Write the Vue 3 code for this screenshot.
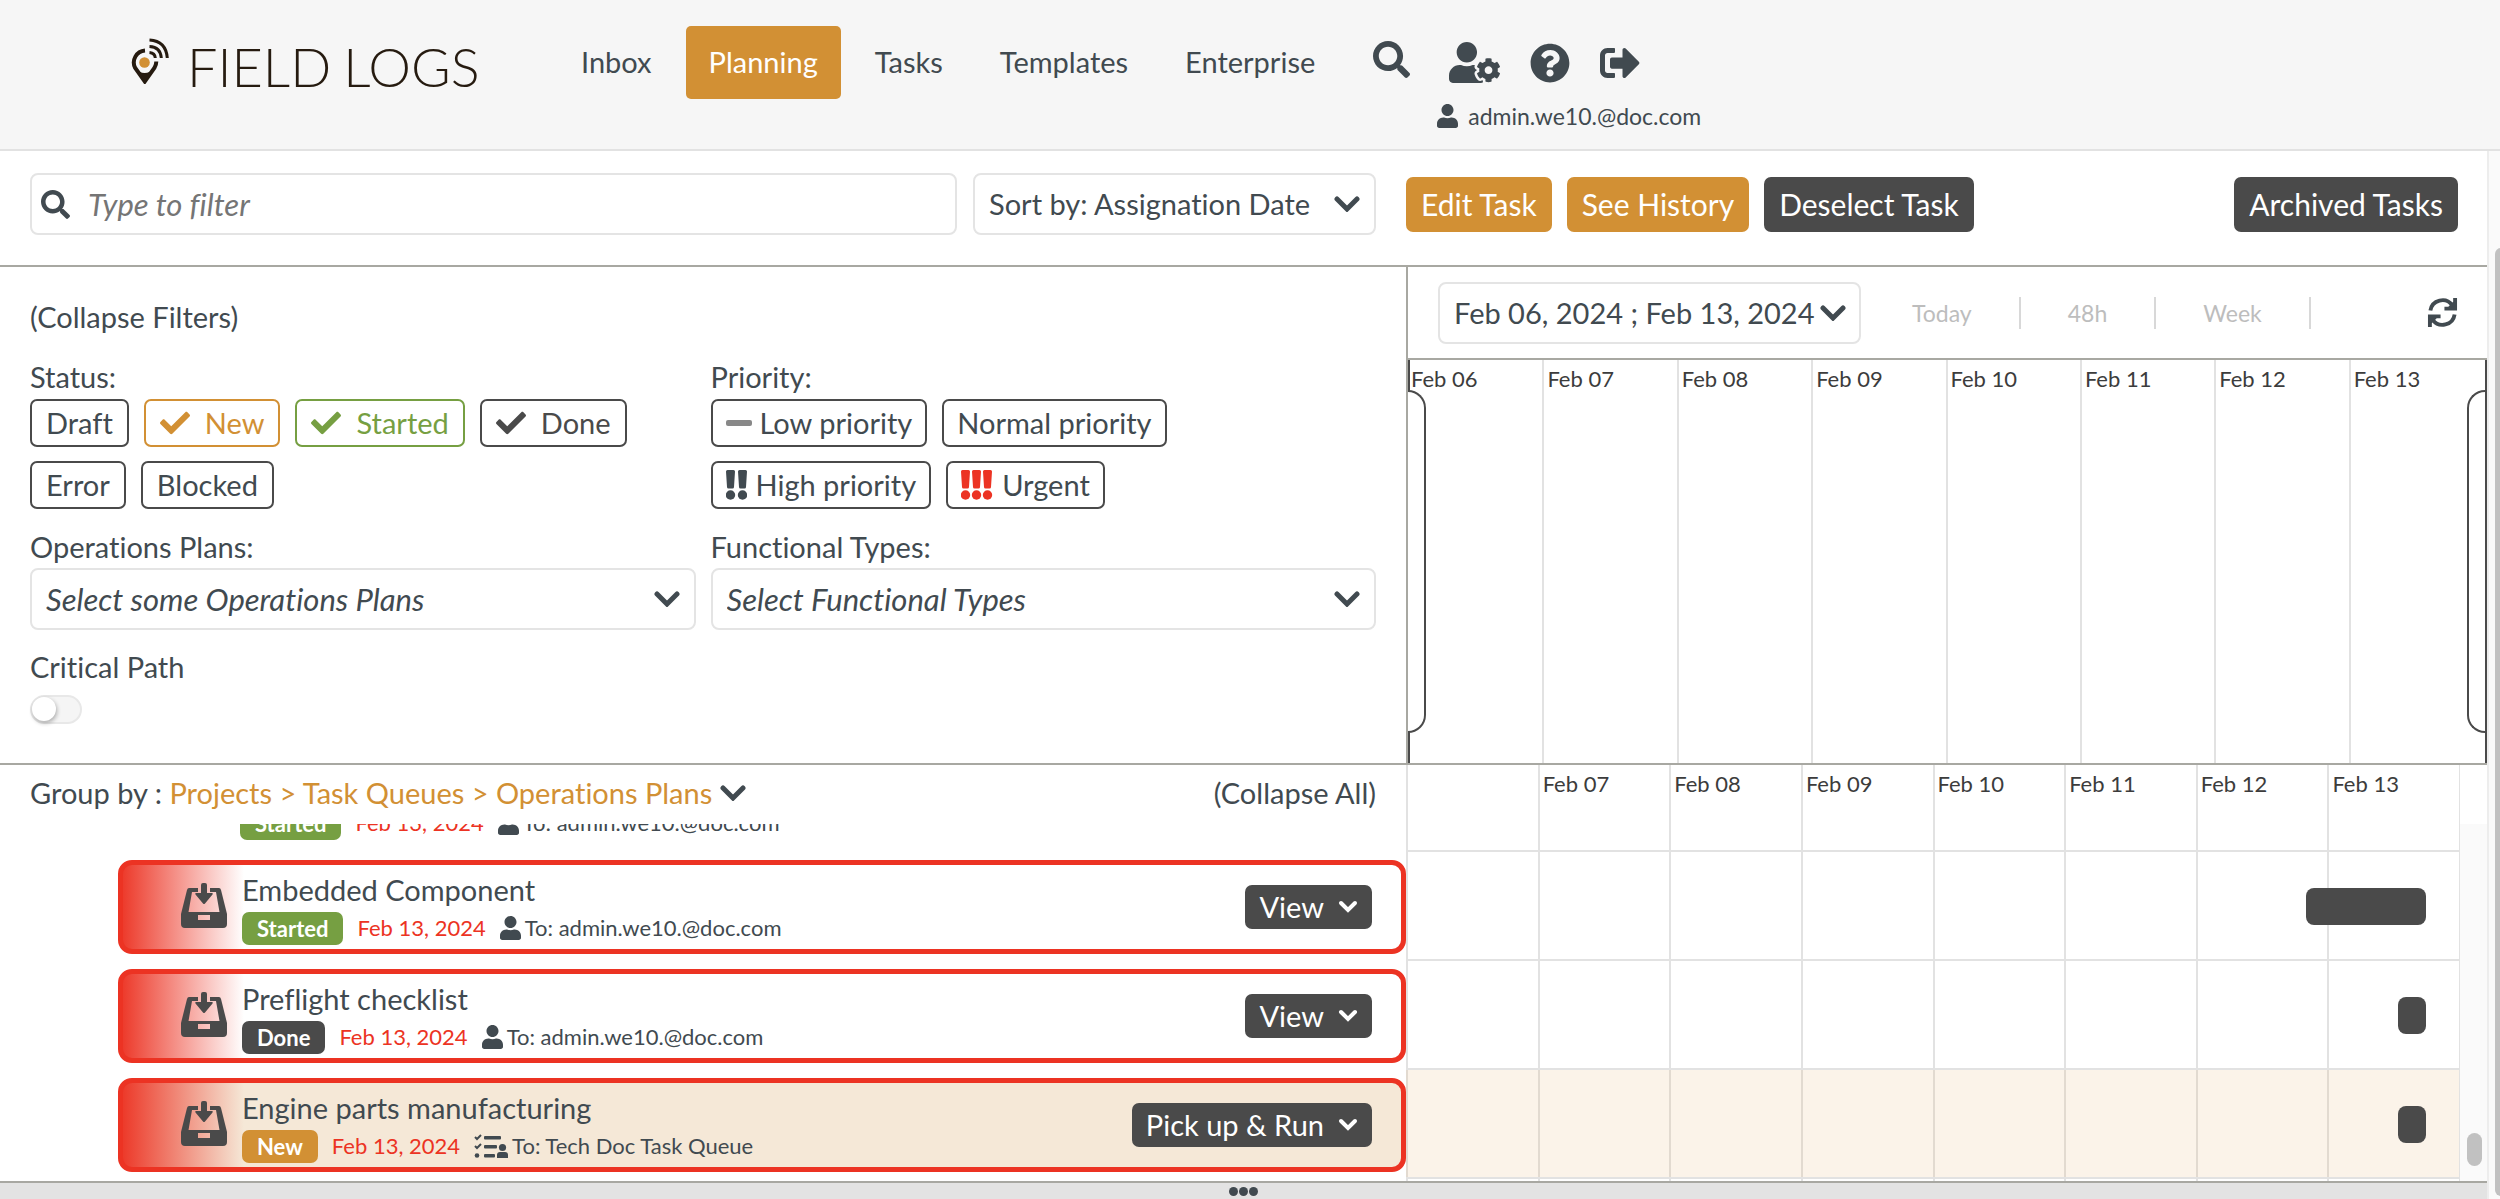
<script setup>
import { ref } from 'vue'

const ICONS = {
  search: { box: '0 0 512 512', d: 'M505 442.7L405.3 343c-4.5-4.5-10.6-7-17-7H372c27.6-35.3 44-79.7 44-128C416 93.1 322.9 0 208 0S0 93.1 0 208s93.1 208 208 208c48.3 0 92.7-16.4 128-44v16.3c0 6.4 2.5 12.5 7 17l99.7 99.7c9.4 9.4 24.6 9.4 33.9 0l28.3-28.3c9.4-9.4 9.4-24.6.1-34zM208 336c-70.7 0-128-57.2-128-128 0-70.7 57.2-128 128-128 70.7 0 128 57.2 128 128 0 70.7-57.2 128-128 128z' },
  user: { box: '0 0 448 512', d: 'M224 256c70.7 0 128-57.3 128-128S294.7 0 224 0 96 57.3 96 128s57.3 128 128 128zm89.6 32h-16.7c-22.2 10.2-46.9 16-72.9 16s-50.6-5.8-72.9-16h-16.7C60.2 288 0 348.2 0 422.4V464c0 26.5 21.5 48 48 48h352c26.5 0 48-21.5 48-48v-41.6c0-74.2-60.2-134.4-134.4-134.4z' },
  userCog: { box: '0 0 640 512', d: 'M610.5 373.3c2.6-14.1 2.6-28.5 0-42.6l25.8-14.9c3-1.7 4.3-5.2 3.3-8.5-6.7-21.6-18.2-41.2-33.2-57.4-2.3-2.5-6-3.1-9-1.4l-25.8 14.9c-10.9-9.3-23.4-16.5-36.9-21.3v-29.8c0-3.4-2.4-6.4-5.7-7.1-22.3-5-45-4.8-66.2 0-3.3.7-5.7 3.7-5.7 7.1v29.8c-13.5 4.8-26 12-36.9 21.3l-25.8-14.9c-2.9-1.7-6.7-1.1-9 1.4-15 16.2-26.5 35.8-33.2 57.4-1 3.3.4 6.8 3.3 8.5l25.8 14.9c-2.6 14.1-2.6 28.5 0 42.6l-25.8 14.9c-3 1.7-4.3 5.2-3.3 8.5 6.7 21.6 18.2 41.1 33.2 57.4 2.3 2.5 6 3.1 9 1.4l25.8-14.9c10.9 9.3 23.4 16.5 36.9 21.3v29.8c0 3.4 2.4 6.4 5.7 7.1 22.3 5 45 4.8 66.2 0 3.3-.7 5.7-3.7 5.7-7.1v-29.8c13.5-4.8 26-12 36.9-21.3l25.8 14.9c2.9 1.7 6.7 1.1 9-1.4 15-16.2 26.5-35.8 33.2-57.4 1-3.3-.4-6.8-3.3-8.5l-25.8-14.9zM496 400.5c-26.8 0-48.5-21.8-48.5-48.5s21.8-48.5 48.5-48.5 48.5 21.8 48.5 48.5-21.7 48.5-48.5 48.5zM224 256c70.7 0 128-57.3 128-128S294.7 0 224 0 96 57.3 96 128s57.3 128 128 128zm201.2 226.5c-2.3-1.2-4.6-2.6-6.8-3.9l-7.9 4.6c-6 3.4-12.8 5.3-19.6 5.3-10.9 0-21.4-4.6-28.9-12.6-18.3-19.8-32.3-43.9-40.2-69.6-5.5-17.7 1.9-36.4 17.9-45.7l7.9-4.6c-.1-2.6-.1-5.2 0-7.8l-7.9-4.6c-16-9.2-23.4-28-17.9-45.7.9-2.9 2.2-5.8 3.2-8.7-3.8-.3-7.5-1.2-11.4-1.2h-16.7c-22.2 10.2-46.9 16-72.9 16s-50.6-5.8-72.9-16h-16.7C60.2 288 0 348.2 0 422.4V464c0 26.5 21.5 48 48 48h352c10.1 0 19.5-3.2 27.2-8.5-1.2-3.8-2-7.7-2-11.8v-9.2z' },
  help: { box: '0 0 512 512', d: 'M504 256c0 136.997-111.043 248-248 248S8 392.997 8 256C8 119.083 119.043 8 256 8s248 111.083 248 248zM262.655 90c-54.497 0-89.255 22.957-116.549 63.758-3.536 5.286-2.353 12.415 2.715 16.258l34.699 26.31c5.205 3.947 12.621 3.008 16.665-2.122 17.864-22.658 30.113-35.797 57.303-35.797 20.429 0 45.698 13.148 45.698 32.958 0 14.976-12.363 22.667-32.534 33.976C247.128 238.528 216 254.941 216 296v4c0 6.627 5.373 12 12 12h56c6.627 0 12-5.373 12-12v-1.333c0-28.462 83.186-29.647 83.186-106.667 0-58.002-60.165-102-116.531-102zM256 338c-25.365 0-46 20.635-46 46 0 25.364 20.635 46 46 46s46-20.636 46-46c0-25.365-20.635-46-46-46z' },
  signOut: { box: '0 0 512 512', d: 'M497 273L329 441c-15 15-41 4.5-41-17v-96H152c-13.3 0-24-10.7-24-24v-96c0-13.3 10.7-24 24-24h136V88c0-21.4 25.9-32 41-17l168 168c9.3 9.4 9.3 24.6 0 34zM192 436v-40c0-6.6-5.4-12-12-12H96c-17.7 0-32-14.3-32-32V160c0-17.7 14.3-32 32-32h84c6.6 0 12-5.4 12-12V76c0-6.6-5.4-12-12-12H96c-53 0-96 43-96 96v192c0 53 43 96 96 96h84c6.6 0 12-5.4 12-12z' },
  check: { box: '0 0 512 512', d: 'M173.898 439.404l-166.4-166.4c-9.997-9.997-9.997-26.206 0-36.204l36.203-36.204c9.997-9.998 26.207-9.998 36.204 0L192 312.69 432.095 72.596c9.997-9.997 26.207-9.997 36.204 0l36.203 36.204c9.997 9.997 9.997 26.206 0 36.204l-294.4 294.401c-9.998 9.997-26.207 9.997-36.204-.001z' },
}

const nav = ['Inbox', 'Planning', 'Tasks', 'Templates', 'Enterprise']
const active = ref('Planning')

const statuses = ref([
  { name: 'Draft', on: false },
  { name: 'New', on: true },
  { name: 'Started', on: true },
  { name: 'Done', on: true },
  { name: 'Error', on: false },
  { name: 'Blocked', on: false },
])
const priorities = ref([
  { name: 'Low priority', mark: 'low', on: false },
  { name: 'Normal priority', mark: '', on: false },
  { name: 'High priority', mark: 'high', on: false },
  { name: 'Urgent', mark: 'urgent', on: false },
])
const marks = { high: [0, 12], urgent: [0, 11, 22] }

const days = ['Feb 06', 'Feb 07', 'Feb 08', 'Feb 09', 'Feb 10', 'Feb 11', 'Feb 12', 'Feb 13']

// start and span are percentages of the visible week
const tasks = [
  { id: 1, status: 'Started', to: 'admin.we10.@doc.com', plain: true },
  { id: 2, title: 'Embedded Component', status: 'Started', to: 'admin.we10.@doc.com', action: 'View', start: 85.5, span: 11.4 },
  { id: 3, title: 'Preflight checklist', status: 'Done', to: 'admin.we10.@doc.com', action: 'View', start: 94.2, span: 2.7 },
  { id: 4, title: 'Engine parts manufacturing', status: 'New', to: 'Tech Doc Task Queue', queue: true, action: 'Pick up & Run', start: 94.2, span: 2.7, selected: true },
]
const critical = ref(false)
const filter = ref('')
</script>

<template>
  <div class="app">
    <header class="top">
      <a class="logo" href="#" aria-label="Field Logs">
        <svg class="pin" viewBox="0 0 38 46" aria-hidden="true">
          <path d="M14 12.500A12 12 0 0 0 4.200 30L13.800 43.500L23.400 30A12 12 0 0 0 25.300 23.500" fill="none" stroke="#261b10" stroke-width="4" />
          <path d="M3.500 30Q13.500 40 24 30L13.600 45Z" fill="#261b10" />
          <circle cx="13.500" cy="24.500" r="5.300" fill="#d29034" />
          <g fill="none" stroke="#261b10" stroke-width="3">
            <path d="M18.500 14.500Q24 15 24.300 20" />
            <path d="M18.500 8.500Q29.500 9 30.300 20" />
            <path d="M18.500 2Q35 3 36.300 20" />
          </g>
        </svg>
        <span class="word"><span>FIELD</span><span>LOGS</span></span>
      </a>
      <nav class="nav">
        <a v-for="n in nav" :key="n" href="#" :class="{ active: n === active }" @click.prevent="active = n">{{ n }}</a>
      </nav>
      <div class="account">
        <div class="tools">
          <button class="bare" aria-label="Search"><svg class="i-search" :viewBox="ICONS.search.box"><path :d="ICONS.search.d" /></svg></button>
          <button class="bare" aria-label="Account settings"><svg class="i-cog" :viewBox="ICONS.userCog.box"><path :d="ICONS.userCog.d" /></svg></button>
          <button class="bare" aria-label="Help"><svg class="i-40" :viewBox="ICONS.help.box"><path :d="ICONS.help.d" /></svg></button>
          <button class="bare" aria-label="Sign out"><svg class="i-40" :viewBox="ICONS.signOut.box"><path :d="ICONS.signOut.d" /></svg></button>
        </div>
        <div class="who">
          <svg class="i-user" :viewBox="ICONS.user.box"><path :d="ICONS.user.d" /></svg>
          <span>admin.we10.@doc.com</span>
        </div>
      </div>
    </header>

    <div class="body">
      <main class="page">
        <section class="split toolbar">
          <div class="search-side">
            <label class="field search">
              <svg :viewBox="ICONS.search.box"><path :d="ICONS.search.d" /></svg>
              <input v-model="filter" type="text" placeholder="Type to filter" aria-label="Type to filter" />
            </label>
            <div class="field pick sort">
              <select aria-label="Sort by"><option>Sort by: Assignation Date</option></select>
              <svg class="chev" viewBox="0 0 26 16"><path d="M3 3L13 13L23 3" /></svg>
            </div>
          </div>
          <div class="actions">
            <button class="btn gold">Edit Task</button>
            <button class="btn gold">See History</button>
            <button class="btn dark">Deselect Task</button>
            <button class="btn dark last">Archived Tasks</button>
          </div>
        </section>

        <section class="split upper">
          <div class="filters">
            <button class="bare collapse">(Collapse Filters)</button>
            <div class="cols">
              <div>
                <div class="label">Status:</div>
                <div class="chips">
                  <button v-for="s in statuses" :key="s.name" class="chip" :class="s.on && s.name.toLowerCase()" :aria-pressed="s.on" @click="s.on = !s.on">
                    <svg v-if="s.on" class="tick" :viewBox="ICONS.check.box"><path :d="ICONS.check.d" /></svg>{{ s.name }}
                  </button>
                </div>
              </div>
              <div>
                <div class="label">Priority:</div>
                <div class="chips">
                  <button v-for="p in priorities" :key="p.name" class="chip prio" :aria-pressed="p.on" @click="p.on = !p.on">
                    <span v-if="p.mark === 'low'" class="dash"></span>
                    <svg v-else-if="p.mark" class="bangs" :class="p.mark" :viewBox="p.mark === 'high' ? '0 0 21 30' : '0 0 32 30'">
                      <g v-for="x in marks[p.mark]" :key="x">
                        <path :d="`M${x} 1.500Q${x} 0 ${x + 1.500} 0H${x + 7.500}Q${x + 9} 0 ${x + 9} 1.500L${x + 8} 17Q${x + 8} 18.500 ${x + 6.500} 18.500H${x + 2.500}Q${x + 1} 18.500 ${x + 1} 17Z`" />
                        <circle :cx="x + 4.5" cy="25" r="4.700" />
                      </g>
                    </svg>{{ p.name }}
                  </button>
                </div>
              </div>
              <div>
                <label class="label" for="plans">Operations Plans:</label>
                <div class="field pick">
                  <select id="plans" class="hint"><option>Select some Operations Plans</option></select>
                  <svg class="chev" viewBox="0 0 26 16"><path d="M3 3L13 13L23 3" /></svg>
                </div>
              </div>
              <div>
                <label class="label" for="types">Functional Types:</label>
                <div class="field pick">
                  <select id="types" class="hint"><option>Select Functional Types</option></select>
                  <svg class="chev" viewBox="0 0 26 16"><path d="M3 3L13 13L23 3" /></svg>
                </div>
              </div>
            </div>
            <label class="critical">
              <span>Critical Path</span>
              <input v-model="critical" type="checkbox" role="switch" />
            </label>
          </div>

          <div class="overview">
            <div class="range">
              <button class="field dates">Feb 06, 2024 ; Feb 13, 2024<svg class="chev" viewBox="0 0 26 16"><path d="M3 3L13 13L23 3" /></svg></button>
              <div class="presets">
                <button class="bare">Today</button>
                <button class="bare">48h</button>
                <button class="bare">Week</button>
              </div>
              <button class="bare refresh" aria-label="Refresh">
                <svg viewBox="0 0 32 32">
                  <g fill="none" stroke="currentColor" stroke-width="4">
                    <path d="M3.500 14A12.500 12.500 0 0 1 26 8.500" />
                    <path d="M28.500 18A12.500 12.500 0 0 1 6 23.500" />
                  </g>
                  <path d="M27 1H31V14H18V10H22L27 5Z" />
                  <path d="M5 31H1V18H14V22H10L5 27Z" />
                </svg>
              </button>
            </div>
            <div class="mini">
              <div v-for="d in days" :key="d" class="cell">{{ d }}</div>
              <span class="handle start"></span>
              <span class="handle end"></span>
            </div>
          </div>
        </section>

        <section class="split lower">
          <div class="queue">
            <div class="group">
              <button class="bare"><span>Group by : </span><span class="path">Projects &gt; Task Queues &gt; Operations Plans</span><svg class="chev" viewBox="0 0 26 16"><path d="M3 3L13 13L23 3" /></svg></button>
              <button class="bare">(Collapse All)</button>
            </div>
            <div class="list">
              <div v-for="t in tasks" :key="t.id" class="row" :class="{ plain: t.plain }">
                <article class="card" :class="{ selected: t.selected }">
                  <svg v-if="!t.plain" class="tray" viewBox="0 0 46 45" aria-hidden="true">
                    <path fill-rule="evenodd" d="M8 5H17V9H11L7.500 29H38.500L35 9H29V5H38Q39.500 5 40 7L46 31V41Q46 45 42 45H4Q0 45 0 41V31L6 7Q6.500 5 8 5ZM17 32V37H29V32Z" />
                    <path d="M20 2Q20 0 22 0H24Q26 0 26 2V10H31Q32.500 10 31.500 11.500L24 20.500Q23 21.500 22 20.500L14.500 11.500Q13.500 10 15 10H20Z" />
                  </svg>
                  <div class="info">
                    <div v-if="t.title" class="title">{{ t.title }}</div>
                    <div class="meta">
                      <span class="badge" :class="t.status.toLowerCase()">{{ t.status }}</span>
                      <span class="due">Feb 13, 2024</span>
                      <span class="to">
                        <svg v-if="t.queue" class="i-queue" viewBox="0 0 34 24">
                          <g fill="none" stroke="currentColor" stroke-width="2"><path d="M1 3L3 5L7 1" /><path d="M1 12L3 14L7 10" /></g>
                          <circle cx="3" cy="21.500" r="2.300" />
                          <rect x="10" y="2" width="17" height="3.500" rx="1" /><rect x="10" y="11" width="13" height="3.500" rx="1" /><rect x="10" y="20" width="11" height="3.500" rx="1" />
                          <circle cx="28.500" cy="13.500" r="3.600" /><path d="M23 24V21Q23 18 26 18H31Q34 18 34 21V24Z" />
                        </svg>
                        <svg v-else class="i-user" :viewBox="ICONS.user.box"><path :d="ICONS.user.d" /></svg>
                        To: {{ t.to }}
                      </span>
                    </div>
                  </div>
                  <button v-if="t.action" class="btn dark run">{{ t.action }}<svg class="chev small" viewBox="0 0 20 14"><path d="M3 3L10 10L17 3" /></svg></button>
                </article>
              </div>
            </div>
          </div>

          <div class="gantt">
            <div class="chart">
              <div class="week head"><div v-for="(d, i) in days" :key="d" class="cell">{{ i ? d : '' }}</div></div>
              <div class="lines">
                <div v-for="t in tasks" :key="t.id" class="week line" :class="{ selected: t.selected }">
                  <div v-for="d in days" :key="d" class="cell"></div>
                  <span v-if="t.span" class="bar" :style="{ left: t.start + '%', width: t.span + '%' }"></span>
                </div>
                <div class="week rest"><div v-for="d in days" :key="d" class="cell"></div></div>
              </div>
            </div>
            <div class="track"><span></span></div>
          </div>
        </section>

        <button class="more" aria-label="More"><i></i><i></i><i></i></button>
      </main>
      <div class="page-scroll"><span></span></div>
    </div>
  </div>
</template>

<style>
body { margin: 0; }
</style>

<style scoped>
* { box-sizing: border-box; }
.app {
  --ink: #414a50;
  --dark: #4a4a4a;
  --gold: #d29034;
  --green: #769f42;
  --red: #ec3323;
  --line: #e2e2e2;
  --rule: #a8a8a2;
  height: 100vh;
  display: flex;
  flex-direction: column;
  overflow: hidden;
  background: #fff;
  color: var(--ink);
  font: 29px/34px Lato, "Open Sans", sans-serif;
  font-variant-ligatures: none;
}
button, input, select { font: inherit; font-variant-ligatures: inherit; color: inherit; margin: 0; }
button { cursor: pointer; white-space: nowrap; }
svg { display: block; flex: none; fill: currentColor; }
.bare { border: 0; background: none; padding: 0; }

.top { flex: none; display: flex; align-items: flex-start; height: 151px; padding: 26px 0 0 131px; background: #f6f6f6; border-bottom: 2px solid var(--line); }
.logo { display: flex; align-items: flex-start; gap: 18px; width: 427px; padding-top: 12px; color: #261b10; text-decoration: none; }
.pin { width: 38px; height: 46px; }
.word { display: flex; gap: 12px; font-size: 54px; line-height: 58px; font-weight: 300; }
.nav { display: flex; gap: 11px; }
.nav a { padding: 19px 23px 21px; line-height: 33px; border-radius: 5px; color: inherit; text-decoration: none; }
.nav a.active { background: var(--gold); color: #fff; }
.account { margin-left: 35px; }
.tools { display: flex; align-items: center; height: 73px; }
.tools > * { margin-right: 30px; }
.i-search { width: 37px; height: 37px; margin-bottom: 6px; }
.i-cog { width: 51px; height: 41px; margin-left: 9px; }
.i-40 { width: 40px; height: 40px; }
.who { display: flex; align-items: center; gap: 10px; margin-left: 64px; font-size: 23px; line-height: 34px; }
.i-user { width: 21px; height: 24px; }

.body { flex: 1; min-height: 0; display: flex; }
.page { flex: 1; min-width: 0; display: flex; flex-direction: column; }
.page-scroll { flex: none; width: 13px; padding: 97px 0 3px 6px; background: #fafafa; border-left: 2px solid #ededed; overflow: hidden; }
.page-scroll span { display: block; width: 12px; height: 100%; border-radius: 8px; background: #c1c1c1; }

.split { flex: none; display: grid; grid-template-columns: minmax(0, 1406fr) minmax(0, 1081fr); border-bottom: 2px solid var(--rule); }
.toolbar { height: 116px; padding-top: 22px; align-items: start; }
.search-side { display: flex; gap: 16px; padding: 0 30px; }
.field { position: relative; display: flex; align-items: center; height: 62px; border: 2px solid #e4e4e4; border-radius: 8px; background: #fff; }
.search { flex: 1; padding-left: 9px; }
.search svg { width: 29px; height: 29px; }
.search input { flex: 1; min-width: 0; height: 100%; padding: 0 0 0 18px; border: 0; outline: 0; background: none; font-size: 31px; font-style: italic; }
.search input::placeholder { color: #757575; opacity: 1; }
.sort { width: 403px; }
.pick select { width: 100%; height: 100%; padding: 0 50px 0 14px; border: 0; outline: 0; background: none; appearance: none; }
.pick .chev { position: absolute; right: 14px; pointer-events: none; }
.chev { width: 26px; height: 16px; fill: none; stroke: currentColor; stroke-width: 5; stroke-linecap: round; }
.pick .hint { font-size: 31px; font-style: italic; }
.actions { display: flex; gap: 15px; padding: 4px 29px 0 0; font-size: 30px; }
.btn { height: 55px; padding: 0 15px 2px; border: 0; border-radius: 7px; color: #fff; }
.gold { background: var(--gold); }
.dark { background: var(--dark); }
.last { margin-left: auto; }

.filters { padding: 33px 30px 39px; }
.collapse { display: block; }
.cols { display: grid; grid-template-columns: 1fr 1fr; column-gap: 15px; row-gap: 20px; margin-top: 25px; }
.label { display: block; padding-bottom: 3px; line-height: 36px; }
.chips { display: flex; flex-wrap: wrap; gap: 14px 15px; width: 640px; padding-top: 1px; }
.chip { display: flex; align-items: center; height: 48px; padding: 0 14px; border: 2px solid var(--dark); border-radius: 7px; background: #fff; }
.chip.prio { padding: 0 13px; }
.chip.new { color: var(--gold); border-color: var(--gold); }
.chip.started { color: var(--green); border-color: var(--green); }
.chip.done { color: var(--dark); }
.tick { width: 30px; height: 30px; margin-right: 15px; }
.dash { width: 26px; height: 6px; margin-right: 8px; border-radius: 2px; background: #888; }
.bangs { height: 30px; margin-right: 9px; }
.bangs.high { width: 21px; }
.bangs.urgent { width: 32px; color: var(--red); }
.critical { display: flex; flex-direction: column; gap: 11px; margin-top: 20px; width: 200px; }
.critical input { appearance: none; width: 52px; height: 29px; border: 2px solid #e8e8e8; border-radius: 15px; background: #f5f5f5; }
.critical input::before { content: ""; display: block; width: 24px; height: 24px; border-radius: 50%; background: #fff; box-shadow: 1px 2px 4px rgba(0, 0, 0, .3); }
.critical input:checked::before { margin-left: 24px; }

.overview { display: flex; flex-direction: column; border-left: 2px solid var(--rule); }
.range { display: flex; align-items: center; height: 93px; padding: 0 29px 0 30px; border-bottom: 2px solid var(--rule); }
.dates { width: 423px; padding: 0 13px 0 14px; justify-content: space-between; }
.presets { display: flex; align-items: center; font-size: 23px; color: #bdbdbd; }
.presets button { padding: 0 47px; line-height: 32px; border-right: 2px solid #d8d8d8; }
.presets button:first-child { padding-left: 51px; }
.refresh { margin-left: auto; }
.refresh svg { width: 31px; height: 31px; }
.mini { position: relative; flex: 1; display: grid; grid-template-columns: repeat(8, 1fr); padding-right: 2px; border-right: 2px solid var(--dark); }
.cell { padding: 5px 0 0 3px; border-left: 2px solid var(--line); font-size: 22px; line-height: 28px; color: #3c3c3c; }
.mini .cell:first-child { border-left-color: var(--dark); padding-left: 1px; }
.handle { position: absolute; top: 30px; bottom: 30px; width: 18px; border: 2px solid var(--dark); background: #fff; }
.handle.start { left: 0; border-left: 0; border-radius: 0 18px 18px 0; }
.handle.end { right: 0; border-right: 0; border-radius: 18px 0 0 18px; }

.lower { flex: 1; min-height: 0; grid-template-rows: minmax(0, 1fr); }
.queue, .chart { min-width: 0; min-height: 0; display: flex; flex-direction: column; }
.group { flex: none; display: flex; justify-content: space-between; height: 59px; padding: 10px 30px 0; }
.group button { display: flex; align-items: center; height: 36px; white-space: pre; }
.group .chev { margin-left: 8px; }
.path { color: var(--gold); }
.list, .lines { flex: 1; min-height: 0; display: flex; flex-direction: column; justify-content: flex-end; overflow: hidden; }
.list { padding-bottom: 2px; }
.row, .line { flex: none; height: 109px; }
.row { padding: 8px 0 0 118px; }
.card { display: flex; align-items: center; height: 94px; padding: 0 29px 0 58px; border: 5px solid var(--red); border-radius: 14px; background: linear-gradient(90deg, var(--red), rgba(236, 51, 35, 0) 126px) border-box, #fff border-box; }
.card.selected { background: linear-gradient(90deg, var(--red), rgba(236, 51, 35, 0) 126px) border-box, #f5e8d7 border-box; }
.row.plain { height: auto; padding-top: 0; }
.plain .card { height: 47px; align-items: flex-start; padding-left: 107px; border: 0; background: none; }
.tray { width: 46px; height: 45px; margin-bottom: 4px; color: var(--dark); }
.info { flex: 1; margin: 4px 0 0 15px; }
.title { margin-bottom: 2px; line-height: 36px; }
.plain .info { margin-top: 0; }
.meta { display: flex; align-items: center; gap: 14px; height: 36px; font-size: 22px; }
.badge { padding: 0 15px; line-height: 33px; border-radius: 7px; color: #fff; font-weight: 700; }
.badge.started { background: var(--green); }
.badge.done { background: var(--dark); }
.badge.new { background: var(--gold); }
.due { color: var(--red); }
.to { display: flex; align-items: center; gap: 4px; }
.i-queue { width: 34px; height: 24px; }
.run { display: flex; align-items: center; gap: 14px; height: 44px; padding: 0 14px; }
.small { width: 20px; height: 14px; stroke-width: 4; }

.gantt { min-width: 0; display: flex; }
.chart { flex: 1; border-right: 1px solid var(--line); }
.week { position: relative; display: grid; grid-template-columns: repeat(8, 1fr); }
.head { flex: none; height: 59px; }
.line { border-bottom: 2px solid var(--line); }
.line.selected { background: #fbf3e9; }
.line.selected .cell { border-left-color: #e2dad0; }
.rest { flex: none; height: 2px; }
.rest .cell { padding: 0; }
.bar { position: absolute; top: 36px; height: 37px; border-radius: 8px; background: var(--dark); }
.track { width: 27px; margin-top: 59px; padding: 0 5px 15px 7px; display: flex; align-items: flex-end; background: #fafafa; }
.track span { width: 15px; height: 33px; border-radius: 8px; background: #c1c1c1; }
.more { flex: none; display: flex; justify-content: center; align-items: center; gap: 1px; height: 16px; padding: 0; border: 0; background: #e3e3e3; }
.more i { width: 9px; height: 9px; border-radius: 50%; background: var(--ink); }
</style>
